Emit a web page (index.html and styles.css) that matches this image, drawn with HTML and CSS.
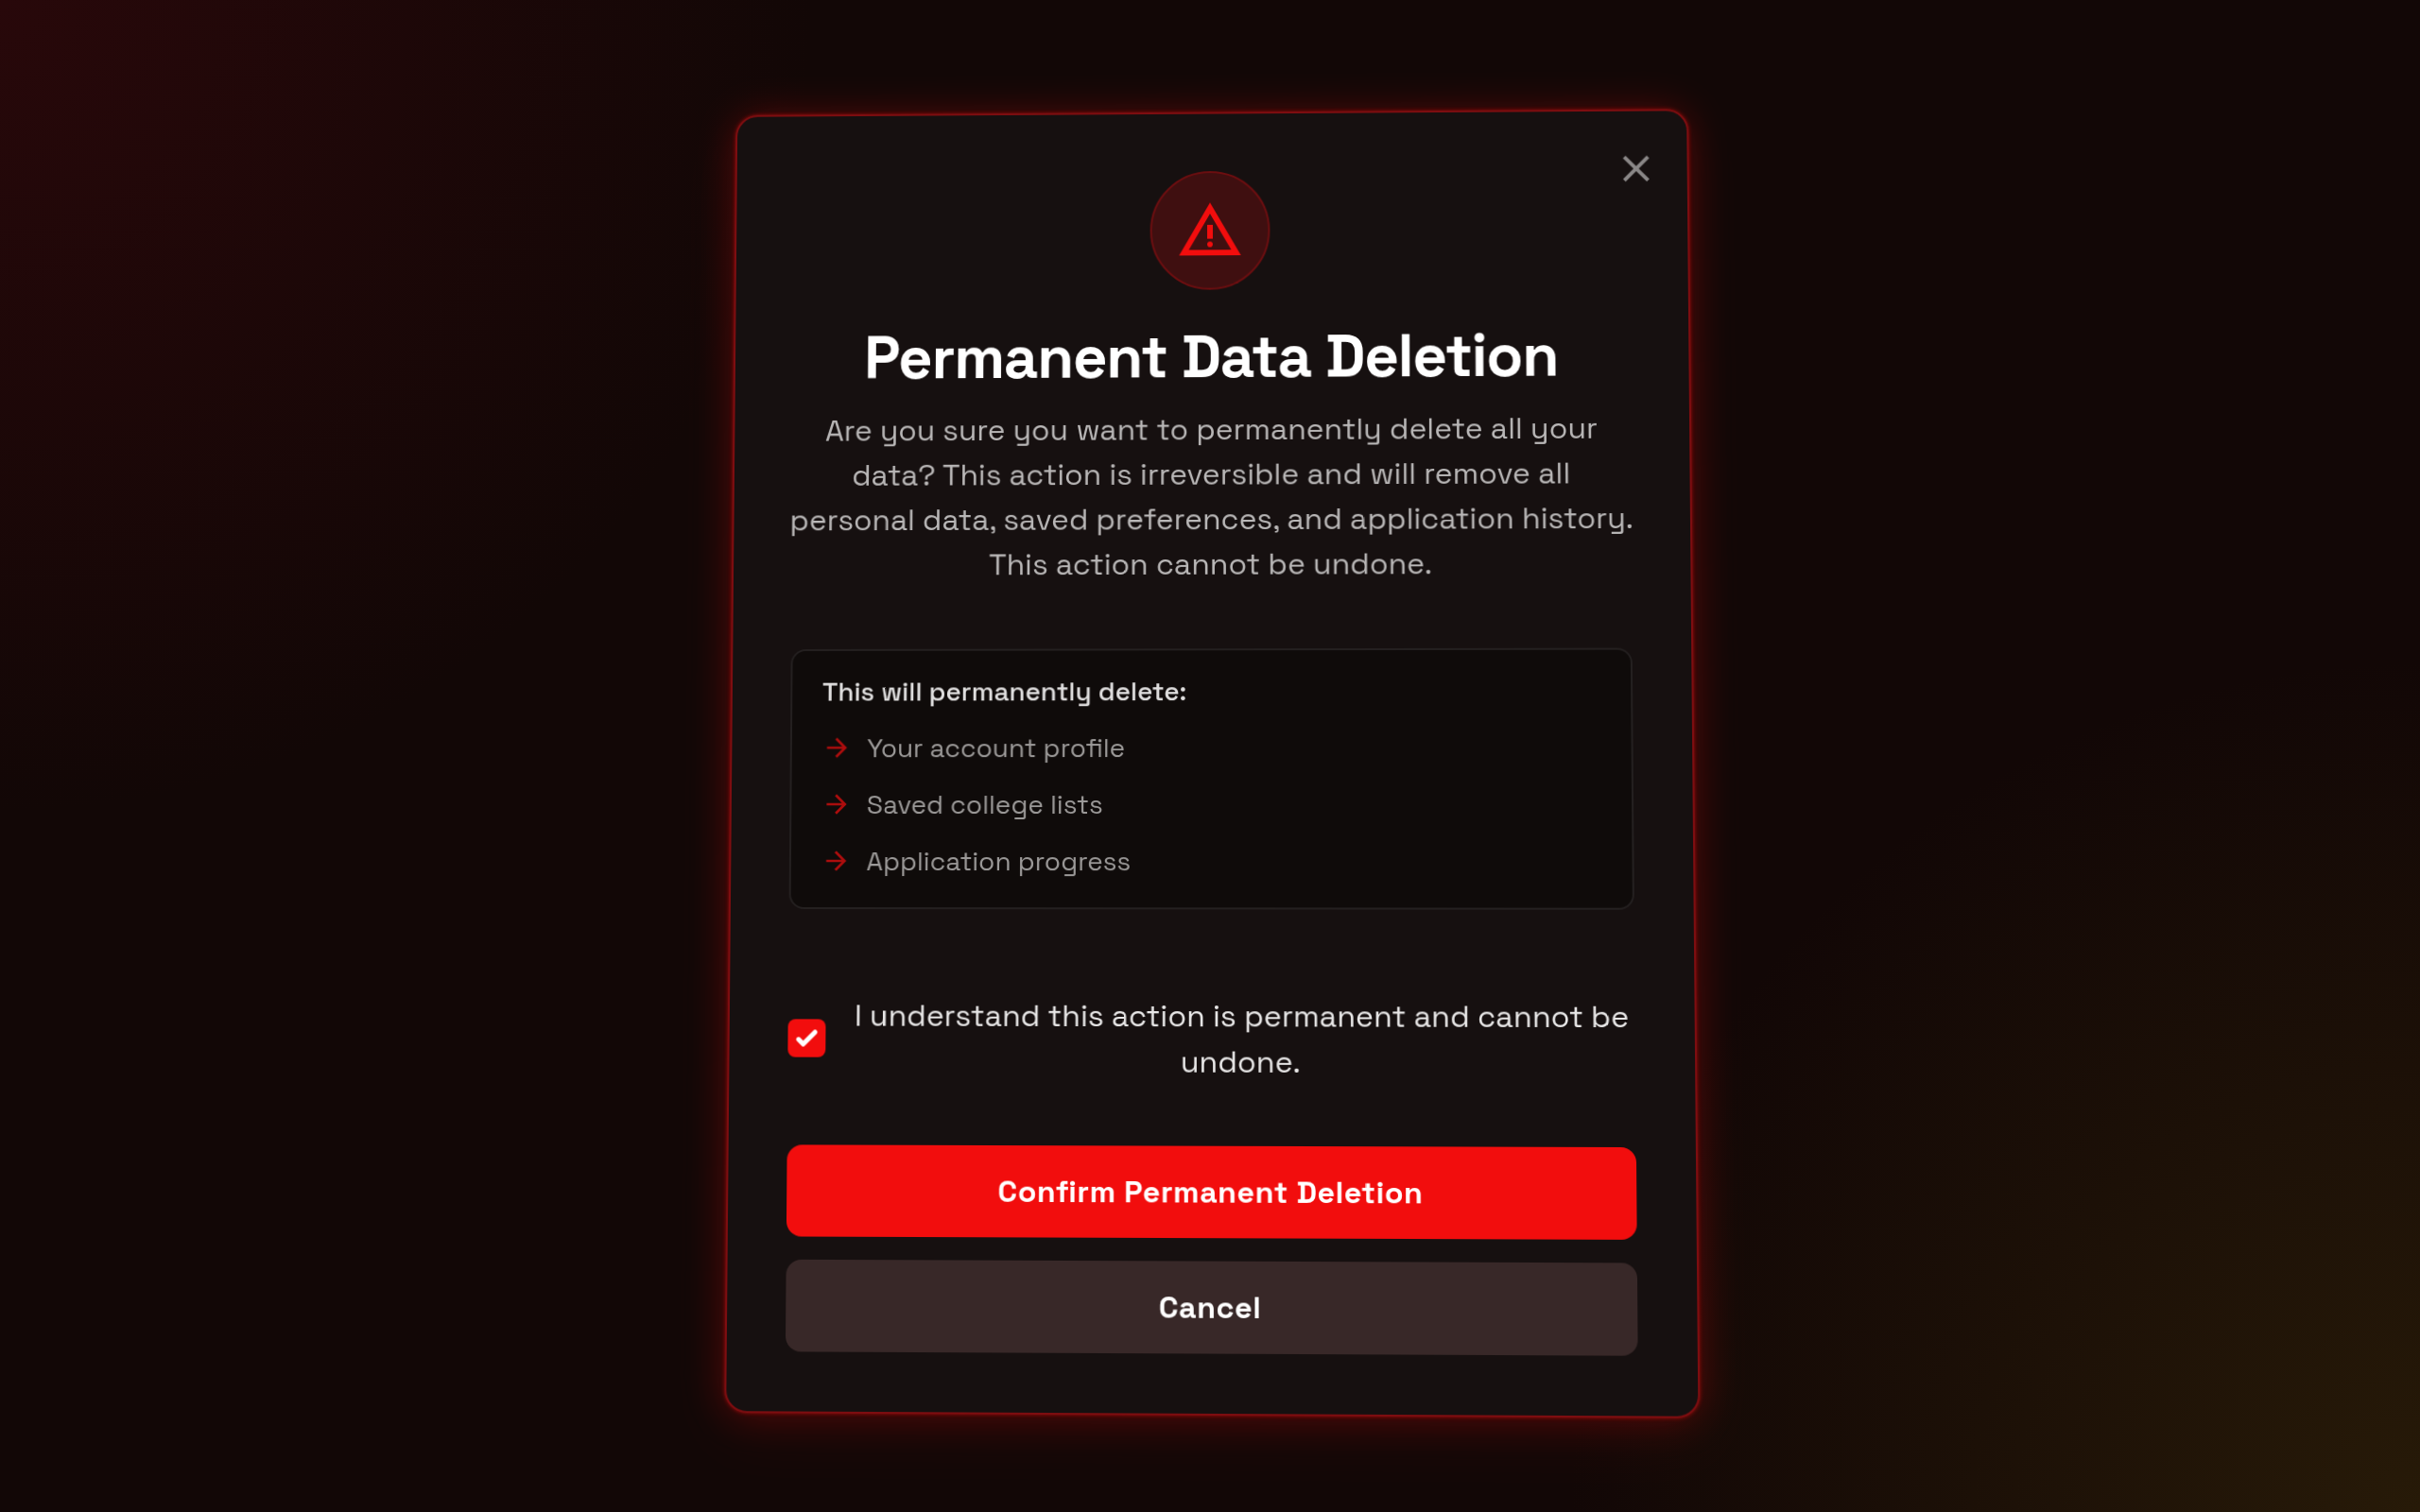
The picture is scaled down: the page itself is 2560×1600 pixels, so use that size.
FILE: index.html
```html
<!DOCTYPE html>
<html lang="en">
<head>
<meta charset="utf-8">
<meta name="viewport" content="width=device-width, initial-scale=1">
<title>Permanent Data Deletion</title>
<link rel="stylesheet" href="styles.css">
</head>
<body>
<main class="stage">
  <section class="dialog" role="dialog" aria-modal="true" aria-labelledby="dialog-title" aria-describedby="dialog-text">
    <button class="close" type="button" aria-label="Close">
      <svg viewBox="0 0 24 24" aria-hidden="true"><path d="M6.4 19 5 17.6l5.6-5.6L5 6.4 6.4 5l5.6 5.6L17.6 5 19 6.4 13.4 12l5.6 5.6-1.4 1.4-5.6-5.6L6.4 19Z"/></svg>
    </button>
    <div class="badge">
      <svg viewBox="0 0 24 24" aria-hidden="true"><path d="M1 21 12 2l11 19H1Zm3.45-2h15.1L12 6 4.45 19ZM12 18q.425 0 .712-.288T13 17q0-.425-.288-.712T12 16q-.425 0-.712.288T11 17q0 .425.288.712T12 18Zm-1-3h2v-5h-2v5Z"/></svg>
    </div>
    <h1 class="title" id="dialog-title">Permanent Data Deletion</h1>
    <p class="text" id="dialog-text">Are you sure you want to permanently delete all your<br>data? This action is irreversible and will remove all<br>personal data, saved preferences, and application history.<br>This action cannot be undone.</p>
    <div class="summary">
      <h2 class="summary-title">This will permanently delete:</h2>
      <ul class="list">
        <li class="item"><svg viewBox="0 0 24 24" aria-hidden="true"><path d="M16.175 13H4v-2h12.175l-5.6-5.6L12 4l8 8-8 8-1.425-1.4 5.6-5.6Z"/></svg>Your account profile</li>
        <li class="item"><svg viewBox="0 0 24 24" aria-hidden="true"><path d="M16.175 13H4v-2h12.175l-5.6-5.6L12 4l8 8-8 8-1.425-1.4 5.6-5.6Z"/></svg>Saved college lists</li>
        <li class="item"><svg viewBox="0 0 24 24" aria-hidden="true"><path d="M16.175 13H4v-2h12.175l-5.6-5.6L12 4l8 8-8 8-1.425-1.4 5.6-5.6Z"/></svg>Application progress</li>
      </ul>
    </div>
    <div class="consent">
      <span class="tick">
        <input class="tick-input" id="consent" type="checkbox" checked>
        <svg viewBox="0 0 16 16" aria-hidden="true"><path d="M12.207 4.793a1 1 0 0 1 0 1.414l-5 5a1 1 0 0 1-1.414 0l-2-2a1 1 0 0 1 1.414-1.414L6.5 9.086l4.293-4.293a1 1 0 0 1 1.414 0z"/></svg>
      </span>
      <label class="consent-label" for="consent">I understand this action is permanent and cannot be undone.</label>
    </div>
    <div class="actions">
      <button class="button danger" type="button">Confirm Permanent Deletion</button>
      <button class="button neutral" type="button">Cancel</button>
    </div>
  </section>
</main>
</body>
</html>
```
FILE: styles.css
```css
*, *::before, *::after { box-sizing: border-box; }

body {
  margin: 0;
  color: #fff;
  font-family: "Space Grotesk", "Inter", "Liberation Sans", sans-serif;
  font-size: 32px;
  line-height: 48px;
  background: #120706;
}

.stage {
  min-height: 100vh;
  display: flex;
  align-items: center;
  justify-content: center;
  padding: 32px;
  overflow: hidden;
  background:
    radial-gradient(circle at 0 0, rgba(62, 9, 14, 0.5), transparent 860px),
    radial-gradient(circle at 100% 100%, rgba(60, 45, 10, 0.5), transparent 900px),
    #120706;
}

.dialog {
  position: relative;
  width: 100%;
  max-width: 1020px;
  padding: 62px;
  display: flex;
  flex-direction: column;
  align-items: center;
  text-align: center;
  background: #161010;
  border: 2px solid #7e0d10;
  border-radius: 24px;
  box-shadow:
    0 0 4px rgba(242, 13, 13, 0.5),
    0 0 40px rgba(242, 13, 13, 0.25),
    0 20px 60px rgba(242, 13, 13, 0.08);
  transform: perspective(2000px) rotateX(2deg) rotateY(-1deg);
}

.close {
  position: absolute;
  top: 38px;
  right: 30px;
  width: 48px;
  height: 48px;
  padding: 0;
  border: 0;
  background: none;
  cursor: pointer;
}

svg { display: block; }
.close svg { width: 48px; height: 48px; fill: #8a8787; }

.badge {
  width: 128px;
  height: 128px;
  display: grid;
  place-items: center;
  border: 2px solid #6d0e10;
  border-radius: 50%;
  background: #3f0f10;
}
.badge svg { width: 72px; height: 72px; fill: #f20d0d; }

.title {
  margin: 34px 0 0;
  font-size: 64px;
  line-height: 76px;
  font-weight: 700;
  letter-spacing: -0.02em;
}

.text { align-self: stretch; margin: 16px -8px 0; color: #b9b7b7; }

.summary {
  align-self: stretch;
  margin-top: 66px;
  padding: 22px 32px 28px;
  border: 2px solid #242020;
  border-radius: 16px;
  background: #0f0b0a;
  text-align: left;
  font-size: 28px;
  line-height: 42px;
}
.summary-title { margin: 0; font-size: 28px; font-weight: 500; color: #e0dfdf; }
.list { margin: 18px 0 0; padding: 0; list-style: none; display: grid; gap: 18px; color: #9c9a99; }
.item { display: flex; align-items: center; gap: 16px; }
.item svg { width: 32px; height: 32px; fill: #ad0d0d; }

.consent {
  align-self: stretch;
  margin-top: 88px;
  display: flex;
  align-items: center;
  gap: 24px;
}
.tick { position: relative; flex: none; width: 40px; height: 40px; }
.tick-input { appearance: none; display: block; width: 40px; height: 40px; margin: 0; border-radius: 8px; background: #f20d0d; }
.tick svg { position: absolute; inset: 0; fill: #fff; pointer-events: none; }
.consent-label { flex: 1; color: #e8e7e7; }

.actions { align-self: stretch; margin-top: 64px; display: grid; gap: 24px; }
.button {
  height: 96px;
  border: 0;
  border-radius: 16px;
  font: inherit;
  font-weight: 700;
  letter-spacing: 0.015em;
  color: #fff;
  cursor: pointer;
}
.danger { background: #f20d0d; }
.neutral { background: #382828; }
```
